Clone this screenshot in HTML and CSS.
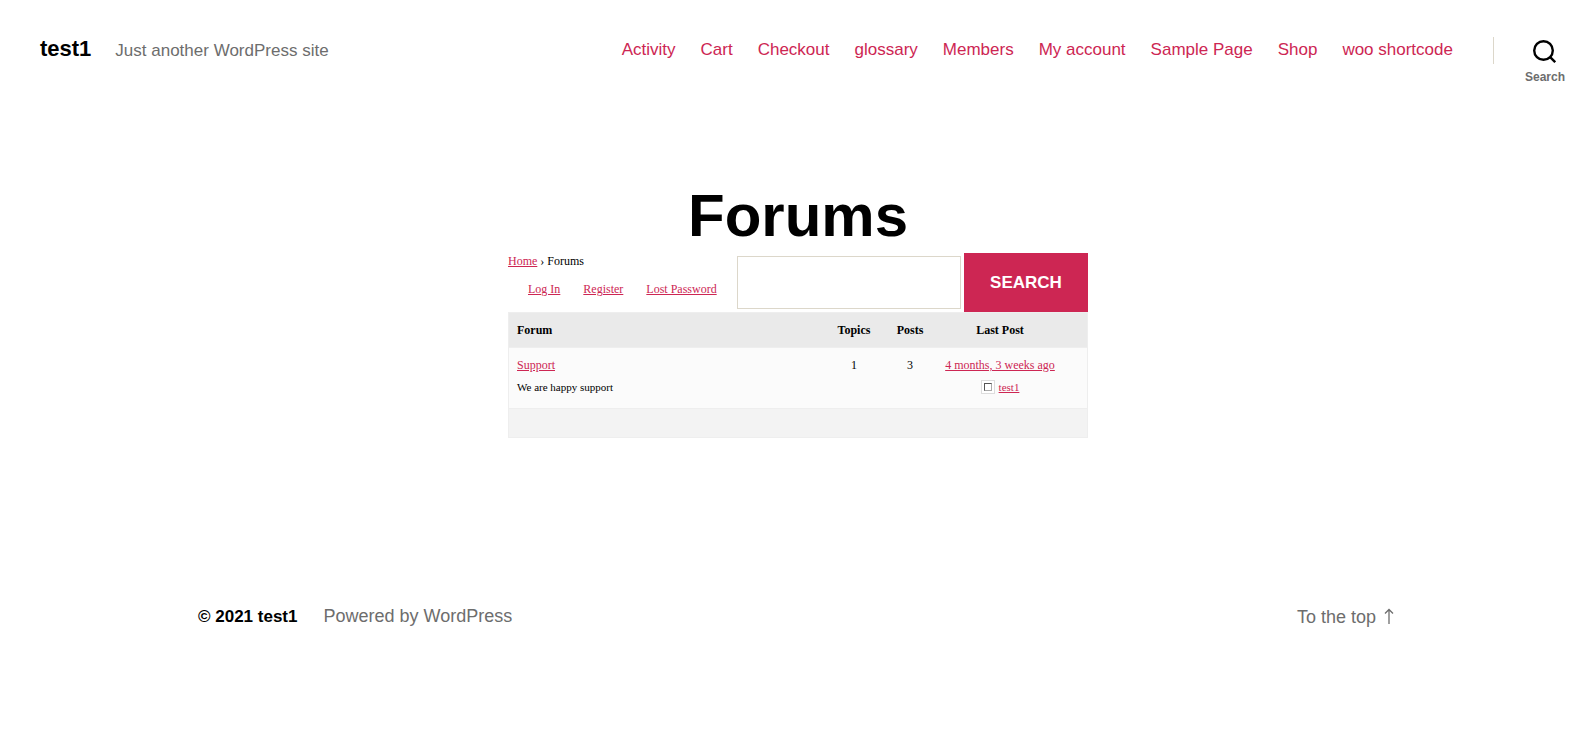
FILE: index.html
```html
<!DOCTYPE html>
<html lang="en">
<head>
<meta charset="utf-8">
<meta name="viewport" content="width=device-width, initial-scale=1">
<title>Forums – test1</title>
<link rel="stylesheet" href="styles.css">
</head>
<body>
<header class="site-header">
  <div class="branding">
    <a class="site-title" href="#">test1</a>
    <span class="site-tagline">Just another WordPress site</span>
  </div>
  <nav class="main-nav" aria-label="Main">
    <a href="#">Activity</a>
    <a href="#">Cart</a>
    <a href="#">Checkout</a>
    <a href="#">glossary</a>
    <a href="#">Members</a>
    <a href="#">My account</a>
    <a href="#">Sample Page</a>
    <a href="#">Shop</a>
    <a href="#">woo shortcode</a>
  </nav>
  <div class="search-toggle-wrap">
    <button class="search-toggle" type="button">
      <svg width="23" height="23" viewBox="0 0 23 23" aria-hidden="true">
        <circle cx="10.5" cy="10.5" r="9.3" fill="none" stroke="currentColor" stroke-width="2.4"/>
        <path d="M16.9 16.9L22.2 22.2" stroke="currentColor" stroke-width="2.4"/>
      </svg>
      <span class="toggle-text">Search</span>
    </button>
  </div>
</header>

<main class="content">
  <h1 class="page-title">Forums</h1>
  <section class="forums">
    <div class="forum-top">
      <div class="forum-links">
        <nav class="breadcrumb" aria-label="Breadcrumb"><a href="#">Home</a> › Forums</nav>
        <div class="account-links">
          <a href="#">Log In</a>
          <a href="#">Register</a>
          <a href="#">Lost Password</a>
        </div>
      </div>
      <form class="forum-search">
        <input class="search-field" type="text" aria-label="Search for:">
        <button class="search-submit" type="submit">SEARCH</button>
      </form>
    </div>
    <table class="forum-table">
      <colgroup>
        <col><col class="col-count"><col class="col-count"><col class="col-last">
      </colgroup>
      <thead>
        <tr><th class="forum-name">Forum</th><th>Topics</th><th>Posts</th><th class="last">Last Post</th></tr>
      </thead>
      <tbody>
        <tr>
          <td class="forum-name"><a href="#">Support</a><div class="detail">We are happy support</div></td>
          <td>1</td>
          <td>3</td>
          <td class="last"><a href="#">4 months, 3 weeks ago</a>
            <div class="detail author"><span class="avatar"></span><a href="#">test1</a></div></td>
        </tr>
      </tbody>
      <tfoot>
        <tr><td colspan="4"></td></tr>
      </tfoot>
    </table>
  </section>
</main>

<footer class="site-footer">
  <div class="credits">
    <a class="copyright" href="#">© 2021 test1</a>
    <a href="#">Powered by WordPress</a>
  </div>
  <a class="to-top" href="#">To the top <svg width="10" height="17" viewBox="0 0 10 17" aria-hidden="true"><path d="M5 16V1.5M1 5.5L5 1.5L9 5.5" fill="none" stroke="currentColor" stroke-width="1.3"/></svg></a>
</footer>
</body>
</html>
```
FILE: styles.css
```css
* {
  box-sizing: border-box;
}

body {
  margin: 0;
  background: #fff;
  color: #000;
  font-family: "Liberation Sans", Arial, sans-serif;
  font-size: 17px;
  line-height: 24px;
}

a {
  color: #cd2653;
}

/* Header */
.site-header {
  display: flex;
  align-items: flex-start;
  padding: 37px 31px 0 40px;
}

.branding {
  display: flex;
  align-items: baseline;
  gap: 24px;
  margin-right: auto;
}

.site-title {
  color: #000;
  font-size: 22px;
  font-weight: 700;
  text-decoration: none;
}

.site-tagline {
  color: #6d6d6d;
}

.main-nav {
  display: flex;
  gap: 25px;
  line-height: 26px;
}

.main-nav a {
  text-decoration: none;
}

.search-toggle-wrap {
  display: flex;
  align-items: flex-start;
  margin-left: 40px;
}

.search-toggle-wrap::before {
  content: "";
  width: 1px;
  height: 27px;
  background: #dcd7ca;
}

.search-toggle {
  display: flex;
  flex-direction: column;
  align-items: center;
  gap: 5px;
  margin-left: 31px;
  padding: 3px 0 0;
  border: 0;
  background: none;
  color: #000;
  font-family: inherit;
}

.toggle-text {
  color: #6d6d6d;
  font-size: 12px;
  font-weight: 700;
  line-height: 18px;
}

/* Page */
.content {
  max-width: 580px;
  margin: 92px auto 0;
}

.page-title {
  margin: 0;
  font-size: 60px;
  line-height: 75px;
  text-align: center;
}

.forums {
  font-family: "Liberation Serif", "Times New Roman", serif;
  font-size: 12px;
  line-height: 18px;
}

.forum-top {
  display: flex;
  justify-content: space-between;
}

.breadcrumb {
  line-height: 16px;
}

.account-links {
  display: flex;
  gap: 23px;
  padding: 11px 0 0 20px;
}

.forum-search {
  display: flex;
  align-items: center;
  gap: 3px;
}

.search-field {
  width: 224px;
  height: 53px;
  padding: 0 16px;
  border: 1px solid #dcd7ca;
  border-radius: 0;
  background: #fff;
  font-size: 16px;
}

.search-submit {
  width: 124px;
  height: 59px;
  padding: 0;
  border: 0;
  background: #cd2653;
  color: #fff;
  font-family: "Liberation Sans", Arial, sans-serif;
  font-size: 17px;
  font-weight: 700;
}

.forum-table {
  width: 100%;
  table-layout: fixed;
  border: 1px solid #eee;
  border-spacing: 0;
}

.col-count {
  width: 56px;
}

.col-last {
  width: 149px;
}

.forum-table th,
.forum-table td {
  padding: 8px 0;
  text-align: center;
  vertical-align: top;
}

.forum-table .forum-name {
  padding-left: 8px;
  text-align: left;
}

.forum-table .last {
  padding-right: 25px;
}

.forum-table th {
  background: #eaeaea;
}

.forum-table tbody td {
  padding-bottom: 12px;
  border-top: 1px solid #eee;
  background: #fbfbfb;
}

.forum-table tfoot td {
  height: 29px;
  padding: 0;
  border-top: 1px solid #eee;
  background: #f3f3f3;
}

.detail {
  padding-top: 4px;
  font-size: 11px;
}

.author {
  display: flex;
  align-items: center;
  justify-content: center;
  gap: 4px;
}

.avatar {
  display: grid;
  width: 14px;
  height: 14px;
  padding: 2px;
  border: 1px solid #ddd;
  background: #fff;
}

.avatar::before {
  content: "";
  border: 1px solid;
  border-color: #555 #aaa #aaa #555;
}

/* Footer */
.site-footer {
  display: flex;
  justify-content: space-between;
  max-width: 1200px;
  margin: 166px auto 0;
  padding-bottom: 60px;
  font-size: 18px;
}

.site-footer a {
  color: #6d6d6d;
  text-decoration: none;
}

.credits {
  display: flex;
  align-items: baseline;
  gap: 26px;
}

.site-footer .copyright {
  color: #000;
  font-size: 17px;
  font-weight: 700;
}

.to-top {
  display: flex;
  align-items: center;
  gap: 8px;
  padding-right: 4px;
}
```
